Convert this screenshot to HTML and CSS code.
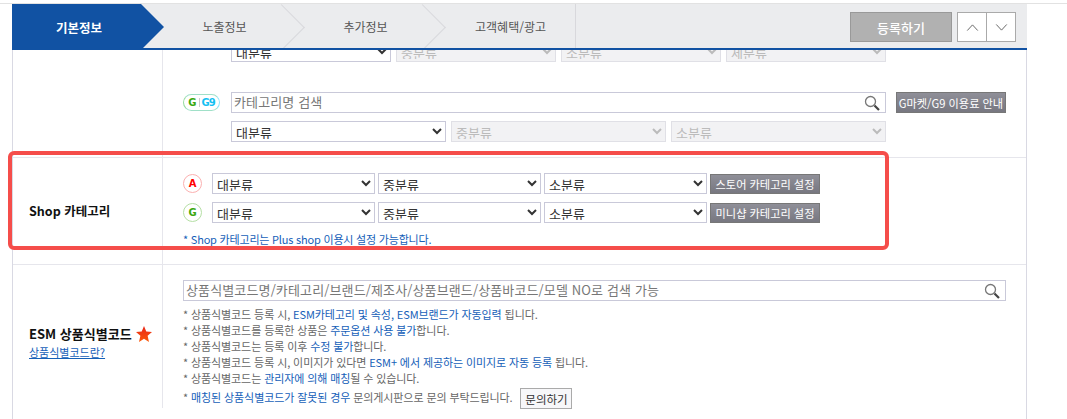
FILE: index.html
```html
<!DOCTYPE html>
<html lang="ko">
<head>
    <meta charset="UTF-8">
    <meta name="viewport" content="width=device-width, initial-scale=1.0">
    <title>상품 등록</title>
    <link rel="stylesheet" href="styles.css">
</head>
<body>
    <div class="top-line"></div>
    <div class="container">
        <div class="header">
            <div class="tabs">
                <a href="#" class="tab active">기본정보</a>
                <a href="#" class="tab arrow">노출정보</a>
                <a href="#" class="tab arrow">추가정보</a>
                <a href="#" class="tab last">고객혜택/광고</a>
            </div>
            <div class="header-actions">
                <button class="submit-btn">등록하기</button>
                <div class="move-btns">
                    <button class="move-btn">
                        <svg viewBox="0 0 14 8" fill="none" stroke="#555" stroke-width="1"><polyline points="1 7.5 7 1 13 7.5"></polyline></svg>
                    </button>
                    <button class="move-btn">
                        <svg viewBox="0 0 14 8" fill="none" stroke="#555" stroke-width="1"><polyline points="1 .5 7 7 13 .5"></polyline></svg>
                    </button>
                </div>
            </div>
        </div>

        <div class="row row-first">
            <div class="row-label"></div>
            <div class="row-body">
                <div class="select-line indent">
                    <select class="w160"><option>대분류</option></select>
                    <select class="w160" disabled><option>중분류</option></select>
                    <select class="w160" disabled><option>소분류</option></select>
                    <select class="w160" disabled><option>세분류</option></select>
                </div>
                <div class="select-line search-line">
                    <span class="badge-double"><b class="g">G</b><i></i><b class="g9">G9</b></span>
                    <div class="search-box w654">
                        <input type="text" placeholder="카테고리명 검색">
                        <svg class="search-icon" viewBox="0 0 16 16" fill="none">
                            <circle cx="6.5" cy="6.5" r="5" stroke="#777" stroke-width="1.3"></circle>
                            <line x1="10.5" y1="10.5" x2="15" y2="15" stroke="#444" stroke-width="2.2"></line>
                        </svg>
                    </div>
                    <button class="dark-btn guide-btn">G마켓/G9 이용료 안내</button>
                </div>
                <div class="select-line indent">
                    <select class="w215"><option>대분류</option></select>
                    <select class="w215" disabled><option>중분류</option></select>
                    <select class="w215" disabled><option>소분류</option></select>
                </div>
            </div>
        </div>

        <div class="row row-shop">
            <div class="row-label"><strong>Shop 카테고리</strong></div>
            <div class="row-body">
                <div class="select-line shop-line">
                    <span class="badge red">A</span>
                    <select class="w163"><option>대분류</option></select>
                    <select class="w163"><option>중분류</option></select>
                    <select class="w163"><option>소분류</option></select>
                    <button class="dark-btn shop-btn">스토어 카테고리 설정</button>
                </div>
                <div class="select-line shop-line">
                    <span class="badge green">G</span>
                    <select class="w163"><option>대분류</option></select>
                    <select class="w163"><option>중분류</option></select>
                    <select class="w163"><option>소분류</option></select>
                    <button class="dark-btn shop-btn">미니샵 카테고리 설정</button>
                </div>
                <p class="shop-note">* Shop 카테고리는 Plus shop 이용시 설정 가능합니다.</p>
            </div>
            <div class="highlight"></div>
        </div>

        <div class="row row-esm">
            <div class="row-label">
                <div class="esm-title">
                    <strong>ESM 상품식별코드</strong>
                    <svg class="star" viewBox="0 0 24 24">
                        <defs>
                            <linearGradient id="starFill" x1="0" y1="0" x2="0" y2="1">
                                <stop offset="0" stop-color="#e8261a"></stop>
                                <stop offset="1" stop-color="#fb5a08"></stop>
                            </linearGradient>
                        </defs>
                        <polygon fill="url(#starFill)" points="12 0 15.4 8.3 24 9 17.4 14.7 19.5 24 12 19 4.5 24 6.6 14.7 0 9 8.6 8.3"></polygon>
                    </svg>
                </div>
                <a href="#" class="esm-link">상품식별코드란?</a>
            </div>
            <div class="row-body">
                <div class="search-box w823">
                    <input type="text" placeholder="상품식별코드명/카테고리/브랜드/제조사/상품브랜드/상품바코드/모델 NO로 검색 가능">
                    <svg class="search-icon" viewBox="0 0 16 16" fill="none">
                        <circle cx="6.5" cy="6.5" r="5" stroke="#777" stroke-width="1.3"></circle>
                        <line x1="10.5" y1="10.5" x2="15" y2="15" stroke="#444" stroke-width="2.2"></line>
                    </svg>
                </div>
                <ul class="notes">
                    <li>* 상품식별코드 등록 시, <em>ESM카테고리 및 속성, ESM브랜드가 자동입력</em> 됩니다.</li>
                    <li>* 상품식별코드를 등록한 상품은 <em>주문옵션 사용 불가</em>합니다.</li>
                    <li>* 상품식별코드는 등록 이후 <em>수정 불가</em>합니다.</li>
                    <li>* 상품식별코드 등록 시, 이미지가 있다면 <em>ESM+ 에서 제공하는 이미지로 자동 등록</em> 됩니다.</li>
                    <li>* 상품식별코드는 <em>관리자에 의해 매칭</em>될 수 있습니다.</li>
                    <li class="last-note">* <em>매칭된 상품식별코드가 잘못된 경우</em> 문의게시판으로 문의 부탁드립니다. <button class="ask-btn">문의하기</button></li>
                </ul>
            </div>
        </div>
    </div>
</body>
</html>
```

FILE: styles.css
```css
* {
    margin: 0;
    padding: 0;
    box-sizing: border-box;
    font-family: "Noto Sans CJK KR", "Liberation Sans", sans-serif;
}

html, body {
    height: 100%;
    overflow: hidden;
    background: white;
}

body {
    padding-top: 3px;
}

.top-line {
    height: 1px;
    background: #e2e2e2;
}

.container {
    width: 1015px;
    min-height: 100%;
    margin-left: 12px;
    border-left: 1px solid #d9d9e3;
    border-right: 1px solid #d9d9e3;
}

/* header */
.header {
    position: relative;
    z-index: 2;
    display: flex;
    justify-content: space-between;
    height: 46px;
    margin-left: -1px;
    margin-right: -1px;
    background: #ebecee;
    border-bottom: 2px solid #1152a3;
}

.tabs {
    display: flex;
    overflow: hidden;
}

.tab {
    position: relative;
    display: flex;
    align-items: center;
    justify-content: center;
    width: 141px;
    padding-right: 20px;
    font-size: 12px;
    color: #555;
    text-decoration: none;
}

.tab.active {
    width: 152px;
    height: 46px;
    padding-right: 18px;
    background: #1152a3;
    color: white;
    font-size: 12.5px;
    font-weight: bold;
    clip-path: polygon(0 0, 129px 0, 100% 50%, 129px 100%, 0 100%);
}

.tab.arrow::after {
    content: "";
    position: absolute;
    top: 7px;
    right: 7px;
    width: 32px;
    height: 32px;
    border-top: 1px solid #d8d8dc;
    border-right: 1px solid #d8d8dc;
    transform: rotate(45deg);
}

.tab.last {
    width: 130px;
    padding-right: 0;
    border-right: 1px solid #d8d8dc;
}

.header-actions {
    display: flex;
    gap: 5px;
    padding: 8px 11px 0 0;
}

.submit-btn {
    width: 102px;
    height: 30px;
    background: #b1b1b1;
    border: 1px solid #999;
    color: white;
    font-size: 13px;
    font-weight: 500;
}

.move-btns {
    display: flex;
}

.move-btn {
    display: flex;
    align-items: center;
    justify-content: center;
    width: 30px;
    height: 30px;
    background: white;
    border: 1px solid #aaa;
}

.move-btn + .move-btn {
    margin-left: -1px;
}

.move-btn svg {
    width: 13px;
    height: 7px;
}

/* rows */
.row {
    position: relative;
    display: flex;
    border-bottom: 1px solid #e6e6ec;
}

.row-label {
    display: flex;
    flex-direction: column;
    justify-content: center;
    width: 150px;
    padding-left: 16px;
    border-right: 1px solid #e6e6ec;
    font-size: 12.5px;
    color: #111;
}

.row-body {
    flex: 1;
    padding-left: 20px;
}

.row-first {
    margin-top: -9px;
}

.row-first .row-body {
    padding-bottom: 15px;
}

.select-line {
    display: flex;
    align-items: center;
    gap: 5px;
}

.select-line.indent {
    padding-left: 48px;
}

.search-line {
    margin: 30px 0 8px;
}

.shop-line {
    gap: 3px;
    margin-bottom: 8px;
}

.row-shop .row-body {
    padding-top: 15px;
}

.row-shop .row-label {
    padding-bottom: 2px;
}

select {
    height: 21px;
    padding-bottom: 2px;
    background: white;
    border: 1px solid #c9c9d9;
    border-radius: 0;
    font-size: 13px;
    color: #333;
}

select:disabled {
    background: #f2f2f4;
    border-color: #e0e0e6;
    color: #bbb;
    opacity: 1;
}

.w160 { width: 160px; }
.w215 { width: 215px; }
.w163 { width: 163px; }
.w654 { width: 655px; }
.w823 { width: 823px; }

.search-box {
    display: flex;
    align-items: center;
    height: 21px;
    padding: 0 5px 0 2px;
    background: white;
    border: 1px solid #c9c9d9;
}

.search-box input {
    flex: 1;
    min-width: 0;
    height: 19px;
    padding-bottom: 2px;
    background: transparent;
    border: none;
    outline: none;
    font-size: 13px;
    letter-spacing: 0.13px;
}

.search-box input::placeholder {
    color: #777;
    opacity: 1;
}

.search-icon {
    flex: none;
    width: 16px;
    height: 16px;
}

/* badges */
.badge-double {
    display: flex;
    align-items: center;
    justify-content: center;
    gap: 2px;
    width: 37px;
    height: 17px;
    margin-right: 6px;
    border: 1.5px solid #96dca0;
    border-right-color: #8ee4f8;
    border-top-color: #a0e0c8;
    border-bottom-color: #a0e0c8;
    border-radius: 9px;
    line-height: 1;
}

.badge-double b {
    font-family: "DejaVu Sans", sans-serif;
    font-size: 10px;
}

.badge-double i {
    width: 1px;
    height: 9px;
    background: #ccc;
}

.badge-double .g { color: #3aa80e; }
.badge-double .g9 { color: #14bff2; letter-spacing: -1px; }

.badge {
    display: flex;
    align-items: center;
    justify-content: center;
    width: 19px;
    height: 19px;
    margin-right: 7px;
    border-radius: 50%;
    font-family: "DejaVu Sans", sans-serif;
    font-size: 10px;
    font-weight: bold;
}

.badge.red {
    border: 1.5px solid #fbb0b0;
    color: #f00;
}

.badge.green {
    border: 1.5px solid #b5dfa5;
    color: #3aa80e;
}

/* buttons */
.dark-btn {
    height: 20px;
    background: linear-gradient(#8f8f98, #777780);
    border: 1px solid #777;
    color: white;
    font-size: 11.2px;
    white-space: nowrap;
}

.guide-btn {
    width: 110px;
    height: 21px;
    margin-left: 5px;
}

.shop-btn {
    width: 110px;
}

.shop-note {
    margin-top: 7px;
    font-size: 11px;
    letter-spacing: -0.2px;
    color: #1560b8;
}

/* annotation drawn over the shop row */
.highlight {
    position: absolute;
    top: -7px;
    left: -5px;
    width: 881px;
    height: 99px;
    border: 4px solid #f54d4a;
    border-radius: 6px;
    pointer-events: none;
}

.row-shop {
    height: 107px;
}

.row-esm {
    border-bottom: none;
}

.row-esm .row-label {
    justify-content: flex-start;
    padding-top: 59px;
}

.row-esm .row-body {
    padding-top: 15px;
}

.esm-title {
    display: flex;
    align-items: center;
    gap: 4px;
    font-size: 13px;
}

.star {
    width: 16px;
    height: 16px;
}

.esm-link {
    margin-top: 1px;
    font-size: 11px;
    color: #1560b8;
}

.notes {
    margin-top: 5px;
    list-style: none;
    font-size: 11px;
    letter-spacing: -0.1px;
    color: #666;
}

.notes li {
    height: 16px;
    line-height: 16px;
}

.notes em {
    font-style: normal;
    color: #1560b8;
}

.notes .last-note {
    height: 21px;
    margin-top: 1px;
    line-height: 20px;
}

.ask-btn {
    width: 52px;
    height: 21px;
    margin-top: 1px;
    margin-left: 5px;
    background: #f7f7f9;
    border: 1px solid #aaa;
    color: #333;
    font-size: 11.5px;
    vertical-align: top;
}
```
